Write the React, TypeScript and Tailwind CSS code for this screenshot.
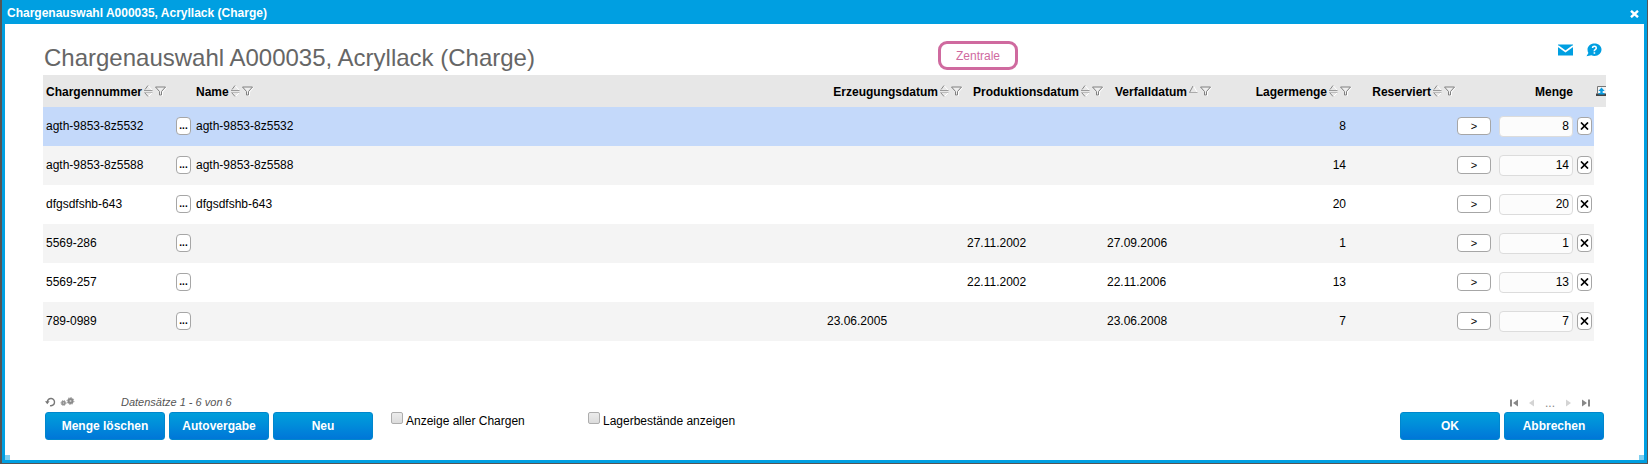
import React from "react";

type Sort = "none" | "asc";

const rows = [
  { nr: "agth-9853-8z5532", name: "agth-9853-8z5532", made: "", prod: "", exp: "", qty: "8" },
  { nr: "agth-9853-8z5588", name: "agth-9853-8z5588", made: "", prod: "", exp: "", qty: "14" },
  { nr: "dfgsdfshb-643", name: "dfgsdfshb-643", made: "", prod: "", exp: "", qty: "20" },
  { nr: "5569-286", name: "", made: "", prod: "27.11.2002", exp: "27.09.2006", qty: "1" },
  { nr: "5569-257", name: "", made: "", prod: "22.11.2002", exp: "22.11.2006", qty: "13" },
  { nr: "789-0989", name: "", made: "23.06.2005", prod: "", exp: "23.06.2008", qty: "7" },
];

function SortIcon({ sort }: { sort: Sort }) {
  return (
    <svg width="9" height="12" viewBox="0 0 9 12" fill="none">
      {sort === "none" ? (
        <>
          <path d="M4.500 1L8 5" stroke="#fff" />
          <path d="M1 4.500L4 0.500" stroke="#888" />
          <path d="M0 5.500H8.500" stroke="#999" />
          <path d="M0 7.500H8.500" stroke="#bbb" />
          <path d="M4.500 11.500L8 8" stroke="#fff" />
          <path d="M1 8L4 11.500" stroke="#888" />
        </>
      ) : (
        <>
          <path d="M4.500 1L8 7" stroke="#fff" />
          <path d="M0.500 7.500L4 1" stroke="#888" />
          <path d="M0 7.500H8.500" stroke="#aaa" />
        </>
      )}
    </svg>
  );
}

function FilterIcon() {
  return (
    <svg width="12" height="11" viewBox="0 0 12 11" fill="none">
      <path d="M11.500 1.500L7.500 6V9.500H5" stroke="#fff" />
      <path d="M0.500 1H10.500L6.500 5.500V9H4.500V5.500Z" fill="#eee" stroke="#808080" />
    </svg>
  );
}

function Head({ label, sort = "none", right = false }: { label: string; sort?: Sort; right?: boolean }) {
  return (
    <div className={right ? "flex items-center justify-end" : "flex items-center pl-[3px]"}>
      <span className="pt-px">{label}</span>
      <button type="button" aria-label={`${label} sortieren`} className="ml-0.5">
        <SortIcon sort={sort} />
      </button>
      <button type="button" aria-label={`${label} filtern`} className="ml-0.5">
        <FilterIcon />
      </button>
    </div>
  );
}

function PrimaryButton({ children, wide = false }: { children: React.ReactNode; wide?: boolean }) {
  return (
    <button
      type="button"
      className={`${wide ? "w-[120px]" : "w-[100px]"} h-7 rounded-[3px] border border-[#0086cd] bg-linear-to-b from-[#009fdb] to-[#0076d8] text-xs font-bold text-white`}
    >
      {children}
    </button>
  );
}

function Check({ id, label }: { id: string; label: string }) {
  return (
    <div className="flex gap-[3px]">
      <input
        id={id}
        type="checkbox"
        className="size-3 appearance-none rounded-[2px] border border-[#adadad] bg-linear-to-b from-[#ececec] to-[#dcdcdc] checked:bg-[#009fe1]"
      />
      <label htmlFor={id} className="pt-px leading-4">
        {label}
      </label>
    </div>
  );
}

const smallButton = "h-[18px] rounded-[4px] border border-[#a6a6a6] bg-white text-black";

export default function App() {
  return (
    <div className="flex min-h-screen flex-col bg-[#555] pr-px pb-px pl-0.5 font-['Liberation_Sans',Arial,sans-serif] text-xs text-black">
      <div className="relative flex flex-1 flex-col border-x-3 border-b-3 border-[#009fe1] bg-white">
        <header className="flex h-6 items-center justify-between bg-[#009fe1] pt-px pr-1 pl-0.5 font-bold text-white">
          <span>Chargenauswahl A000035, Acryllack (Charge)</span>
          <button type="button" aria-label="Schließen" className="pt-0.5 pr-px">
            <svg width="9" height="8" viewBox="0 0 9 8" fill="none">
              <path d="M1 0.800L8 7.200M8 0.800L1 7.200" stroke="#fff" strokeWidth="2.400" />
            </svg>
          </button>
        </header>

        <main className="flex flex-1 flex-col px-[38px] pb-5">
          <div className="grid h-[51px] grid-cols-[895fr_80px_588fr] items-center">
            <h1 className="pt-4 pl-px text-2xl leading-7 whitespace-nowrap text-[#666]">
              Chargenauswahl A000035, Acryllack (Charge)
            </h1>
            <div className="mt-3 flex h-[29px] items-center justify-center rounded-[9px] border-3 border-[#cf6a9f] text-[#cf6a9f]">
              Zentrale
            </div>
            <div className="flex items-center justify-end gap-3 pr-1">
              <button type="button" aria-label="E-Mail">
                <svg width="17" height="14" viewBox="0 0 17 14">
                  <path d="M1 1.500H16V12.500H1Z" fill="#009fe1" />
                  <path d="M1 3L8.500 8.500L16 3" fill="none" stroke="#fff" strokeWidth="1.600" />
                </svg>
              </button>
              <button type="button" aria-label="Hilfe">
                <svg width="16" height="14" viewBox="0 0 16 14">
                  <path d="M8.500 0.500C12.600 0.500 15.500 3.200 15.500 6.500S12.600 13 8.500 13Q6.800 13 5.400 12.300L0.500 13.200L2.400 10Q1.500 8.500 1.500 6.500C1.500 3.200 4.500 0.500 8.500 0.500Z" fill="#009fe1" />
                  <path d="M6.500 5Q6.600 3.300 8.400 3.300T10.300 5Q10.300 6 9.200 6.600T8.400 8.200M8.400 9.200V10.700" fill="none" stroke="#fff" strokeWidth="1.600" />
                </svg>
              </button>
            </div>
          </div>

          <table className="w-full table-fixed border-collapse">
            <colgroup>
              <col className="w-[133px]" />
              <col className="w-[17px]" />
              <col />
              <col className="w-[140px]" />
              <col className="w-[140px]" />
              <col className="w-[110px]" />
              <col className="w-[140px]" />
              <col className="w-[103px]" />
              <col className="w-[42px]" />
              <col className="w-[75px]" />
              <col className="w-[20px]" />
              <col className="w-[12px]" />
            </colgroup>
            <thead>
              <tr className="h-8 bg-[#e7e7e7] text-left">
                <th className="p-0"><Head label="Chargennummer" /></th>
                <th className="p-0" />
                <th className="p-0"><Head label="Name" /></th>
                <th className="p-0 pr-px"><Head label="Erzeugungsdatum" right /></th>
                <th className="p-0"><Head label="Produktionsdatum" right /></th>
                <th className="p-0 pr-0.5"><Head label="Verfalldatum" sort="asc" right /></th>
                <th className="p-0 pr-0.5"><Head label="Lagermenge" right /></th>
                <th className="p-0 pr-px"><Head label="Reserviert" right /></th>
                <th className="p-0" />
                <th className="p-0 pt-px pr-px text-right">Menge</th>
                <th className="p-0" />
                <th className="p-0 pl-0.5">
                  <button type="button" aria-label="Spalten" className="block">
                    <svg width="10" height="11" viewBox="0 0 10 11">
                      <path d="M1 1H10V7.500H1Z" fill="#f4f4f4" />
                      <path d="M1.500 7.500V0.500H10" fill="none" stroke="#777" />
                      <path d="M0 7.500H10V10H0Z" fill="#444" />
                      <path d="M4.300 7V5H2.300L5.500 1.500L8.700 5H6.700V7H8.500V8.500H2.500V7Z" fill="#0a9be0" />
                    </svg>
                  </button>
                </th>
              </tr>
            </thead>
            <tbody>
              {rows.map((r, i) => {
                const bg = i === 0 ? "bg-[#c4d9fa]" : i % 2 ? "bg-[#f4f4f4]" : "bg-white";
                const text = `${bg} p-0 pb-0.5 pl-[3px]`;
                const control = `${bg} p-0 pb-px`;
                return (
                  <tr key={r.nr} className="h-[39px]">
                    <td className={text}>{r.nr}</td>
                    <td className={control}>
                      <button type="button" aria-label={`Details ${r.nr}`} className={`${smallButton} block w-[15px] text-[10px] leading-3 font-bold`}>...</button>
                    </td>
                    <td className={text}>{r.name}</td>
                    <td className={text}>{r.made}</td>
                    <td className={text}>{r.prod}</td>
                    <td className={text}>{r.exp}</td>
                    <td className={`${bg} p-0 pr-2 pb-0.5 text-right`}>{r.qty}</td>
                    <td className={text} />
                    <td className={control}>
                      <button type="button" aria-label={`Menge übernehmen ${r.nr}`} className={`${smallButton} block w-[34px] text-[11px] leading-4`}>&gt;</button>
                    </td>
                    <td className={control}>
                      <input
                        type="text"
                        aria-label={`Menge ${r.nr}`}
                        defaultValue={r.qty}
                        className="block h-[21px] w-[74px] rounded-[4px] border border-[#dcdcdc] bg-[#fcfcfc] pr-[3px] text-right"
                      />
                    </td>
                    <td className={`${control} pl-[3px]`}>
                      <button type="button" aria-label={`Menge leeren ${r.nr}`} className={`${smallButton} flex w-[15px] items-center justify-center`}>
                        <svg width="9" height="8" viewBox="0 0 9 8" fill="none">
                          <path d="M1 0.500L8 7.500M8 0.500L1 7.500" stroke="#000" strokeWidth="1.700" />
                        </svg>
                      </button>
                    </td>
                    <td className="p-0" />
                  </tr>
                );
              })}
            </tbody>
          </table>

          <footer className="mt-auto px-0.5">
            <div className="flex h-5 items-center justify-between">
              <div className="flex items-center">
                <button type="button" aria-label="Aktualisieren">
                  <svg width="11" height="10" viewBox="0 0 11 10" fill="none">
                    <path d="M2.300 5A3.600 3.600 0 1 1 5 8.600" stroke="#777" strokeWidth="1.400" />
                    <path d="M0 4.200H4.600L2.300 7.200Z" fill="#777" />
                  </svg>
                </button>
                <button type="button" aria-label="Einstellungen" className="ml-1">
                  <svg width="15" height="10" viewBox="0 0 15 10" fill="none">
                    <circle cx="3.500" cy="6" r="2.300" fill="#909090" />
                    <circle cx="3.500" cy="6" r="2.500" stroke="#909090" strokeDasharray="1 1" />
                    <circle cx="3.500" cy="6" r="0.700" fill="#ccc" />
                    <circle cx="10.500" cy="4" r="3" fill="#8a8a8a" />
                    <circle cx="10.500" cy="4" r="3.400" stroke="#8a8a8a" strokeDasharray="1.300 1.300" />
                    <circle cx="10.500" cy="4" r="1" fill="#ccc" />
                  </svg>
                </button>
                <span className="ml-[46px] text-[11px] text-[#555] italic">Datensätze 1 - 6 von 6</span>
              </div>
              <nav aria-label="Seiten" className="flex items-center pt-0.5 pr-3.5 text-[#888]">
                <button type="button" aria-label="Erste Seite">
                  <svg width="9" height="8" viewBox="0 0 9 8" fill="#888"><path d="M0 0.500H2V7.500H0ZM8 0.500V7.500L3 4Z" /></svg>
                </button>
                <button type="button" aria-label="Vorherige Seite" className="ml-2.5">
                  <svg width="6" height="8" viewBox="0 0 6 8" fill="#d4d4d4"><path d="M5 0.500V7.500L0 4Z" /></svg>
                </button>
                <span className="mx-2.5 w-[10px] text-center">...</span>
                <button type="button" aria-label="Nächste Seite">
                  <svg width="6" height="8" viewBox="0 0 6 8" fill="#d4d4d4"><path d="M1 0.500V7.500L6 4Z" /></svg>
                </button>
                <button type="button" aria-label="Letzte Seite" className="ml-2.5">
                  <svg width="9" height="8" viewBox="0 0 9 8" fill="#888"><path d="M7 0.500H9V7.500H7ZM1 0.500V7.500L6 4Z" /></svg>
                </button>
              </nav>
            </div>
            <div className="flex justify-between">
              <div className="flex">
                <div className="flex gap-1">
                  <PrimaryButton wide>Menge löschen</PrimaryButton>
                  <PrimaryButton>Autovergabe</PrimaryButton>
                  <PrimaryButton>Neu</PrimaryButton>
                </div>
                <div className="ml-[18px] w-[197px]">
                  <Check id="alle" label="Anzeige aller Chargen" />
                </div>
                <Check id="bestand" label="Lagerbestände anzeigen" />
              </div>
              <div className="flex gap-1">
                <PrimaryButton>OK</PrimaryButton>
                <PrimaryButton>Abbrechen</PrimaryButton>
              </div>
            </div>
          </footer>
        </main>
        <span className="absolute bottom-0 left-0 size-[5px] bg-[#7fcff0]" />
        <span className="absolute right-0 bottom-0 size-[5px] bg-[#7fcff0]" />
      </div>
    </div>
  );
}
